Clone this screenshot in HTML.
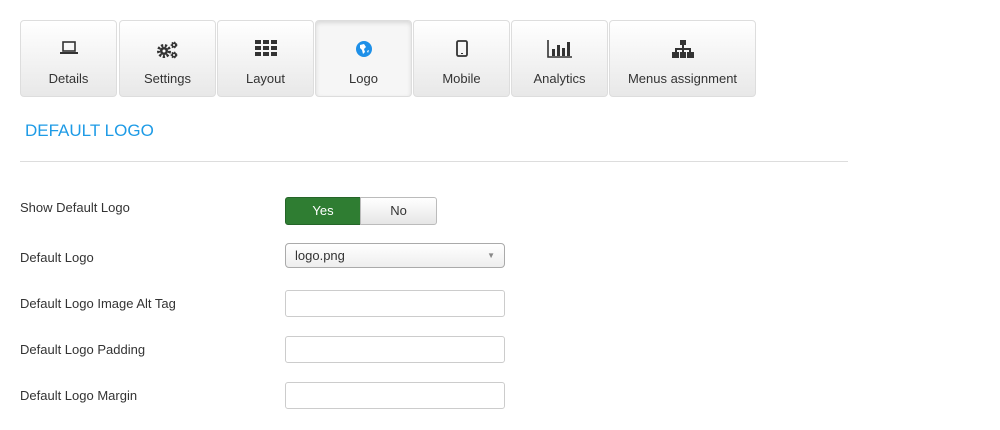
<!DOCTYPE html>
<html><head><style>
body{margin:0;background:#fff;font-family:"Liberation Sans",sans-serif;font-size:13px;color:#333;width:1000px;height:430px;overflow:hidden;position:relative}
.tab{position:absolute;top:20px;height:77px;border:1px solid #ddd;border-radius:4px;background:linear-gradient(#fff,#e8e8e8);box-sizing:border-box;text-align:center}
.tab.act{background:#f6f6f6;box-shadow:inset 0 2px 4px rgba(0,0,0,.12)}
.tab svg{position:absolute;left:50%;top:19px;transform:translateX(-50%)}
.tab span{position:absolute;left:0;right:0;top:50px;font-size:13px;color:#333}
.lbl{position:absolute;left:20px;font-size:13px;color:#333}
.inp{position:absolute;left:285px;width:220px;height:27px;border:1px solid #ccc;border-radius:3px;box-sizing:border-box;background:#fff}
</style></head><body>
<div class="tab" style="left:20px;width:97px"><svg width="20" height="16" viewBox="0 0 20 16"><rect x="4" y="2" width="12" height="9" fill="none" stroke="#333" stroke-width="1.6"/><rect x="1" y="12" width="18" height="2" fill="#333"/></svg><span>Details</span></div>
<div class="tab" style="left:119px;width:97px"><svg width="24" height="20" viewBox="0 0 24 20"><circle cx="8" cy="11" r="5.5" fill="none" stroke="#333" stroke-width="3" stroke-dasharray="2.2 1.6"/><circle cx="8" cy="11" r="4" fill="#333"/><circle cx="8" cy="11" r="1.5" fill="#fff"/><circle cx="18" cy="5" r="2.6" fill="#333" stroke="#333" stroke-width="1.5" stroke-dasharray="1.4 1"/><circle cx="18" cy="5" r="1" fill="#fff"/><circle cx="18" cy="15" r="2.6" fill="#333" stroke="#333" stroke-width="1.5" stroke-dasharray="1.4 1"/><circle cx="18" cy="15" r="1" fill="#fff"/></svg><span>Settings</span></div>
<div class="tab" style="left:217px;width:97px"><svg width="22" height="16" viewBox="0 0 22 16"><g fill="#333"><rect x="0" y="0" width="6" height="4"/><rect x="8" y="0" width="6" height="4"/><rect x="16" y="0" width="6" height="4"/><rect x="0" y="6" width="6" height="4"/><rect x="8" y="6" width="6" height="4"/><rect x="16" y="6" width="6" height="4"/><rect x="0" y="12" width="6" height="4"/><rect x="8" y="12" width="6" height="4"/><rect x="16" y="12" width="6" height="4"/></g></svg><span>Layout</span></div>
<div class="tab act" style="left:315px;width:97px"><svg width="18" height="18" viewBox="0 0 18 18"><circle cx="9" cy="9" r="8" fill="#1e90e8"/><path d="M5 5 L9 4 L11 7 L9 9 L10 12 L8 14 L7 10 L5 8Z M12 11 L14 10 L13 13Z" fill="#fff"/></svg><span>Logo</span></div>
<div class="tab" style="left:413px;width:97px"><svg width="14" height="18" viewBox="0 0 14 18"><rect x="2" y="1" width="10" height="15" rx="1.5" fill="none" stroke="#333" stroke-width="1.8"/><rect x="6" y="13" width="2" height="1" fill="#333"/></svg><span>Mobile</span></div>
<div class="tab" style="left:511px;width:97px"><svg width="26" height="18" viewBox="0 0 26 18"><path d="M1 0V17H25" fill="none" stroke="#333" stroke-width="1.6"/><g fill="#333"><rect x="5" y="9" width="3" height="7"/><rect x="10" y="5" width="3" height="11"/><rect x="15" y="8" width="3" height="8"/><rect x="20" y="2" width="3" height="14"/></g></svg><span>Analytics</span></div>
<div class="tab" style="left:609px;width:147px"><svg width="22" height="18" viewBox="0 0 22 18"><g fill="#333"><rect x="8" y="0" width="6" height="5"/><rect x="10" y="5" width="2" height="4"/><rect x="3" y="8" width="16" height="2"/><rect x="3" y="9" width="2" height="4"/><rect x="17" y="9" width="2" height="4"/><rect x="10" y="9" width="2" height="4"/><rect x="0" y="12" width="7" height="6"/><rect x="8" y="12" width="6" height="6"/><rect x="15" y="12" width="7" height="6"/></g></svg><span>Menus assignment</span></div>
<div style="position:absolute;left:25px;top:121px;font-size:17px;color:#1e9be6">DEFAULT LOGO</div>
<div style="position:absolute;left:20px;top:161px;width:828px;height:1px;background:#ddd"></div>
<div class="lbl" style="top:200px">Show Default Logo</div>
<div class="lbl" style="top:250px">Default Logo</div>
<div class="lbl" style="top:296px">Default Logo Image Alt Tag</div>
<div class="lbl" style="top:342px">Default Logo Padding</div>
<div class="lbl" style="top:388px">Default Logo Margin</div>
<div style="position:absolute;left:285px;top:197px;width:76px;height:28px;background:#2f7d32;border:1px solid #256528;border-radius:3px 0 0 3px;box-sizing:border-box;color:#fff;text-align:center;line-height:26px">Yes</div>
<div style="position:absolute;left:360px;top:197px;width:77px;height:28px;background:linear-gradient(#fff,#e6e6e6);border:1px solid #bbb;border-radius:0 3px 3px 0;box-sizing:border-box;text-align:center;line-height:26px;color:#333">No</div>
<div class="inp" style="top:243px;height:25px;background:linear-gradient(#fff,#eee);border-color:#aaa;border-radius:4px;line-height:23px;padding-left:9px">logo.png<span style="position:absolute;right:9px;top:0;font-size:8px;color:#888">▼</span></div>
<div class="inp" style="top:290px"></div>
<div class="inp" style="top:336px"></div>
<div class="inp" style="top:382px"></div>
</body></html>
